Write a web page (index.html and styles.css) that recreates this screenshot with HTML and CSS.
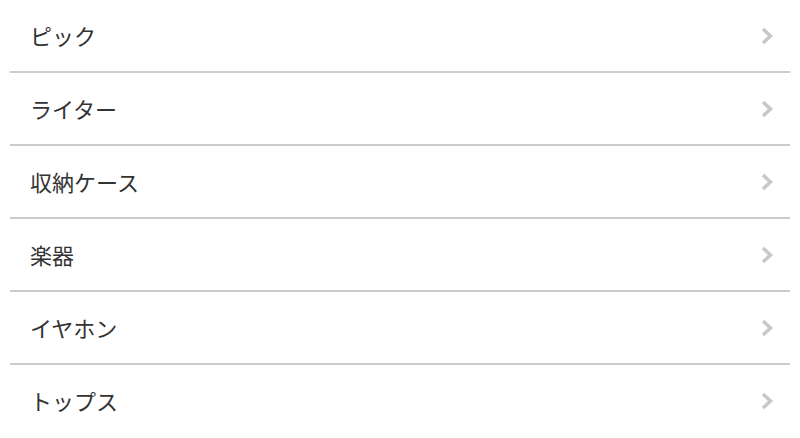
FILE: index.html
```html
<!DOCTYPE html>
<html lang="ja">
<head>
  <meta charset="UTF-8">
  <meta name="viewport" content="width=device-width, initial-scale=1.0">
  <title>カテゴリ</title>
  <link rel="stylesheet" href="styles.css">
</head>
<body>
  <ul class="menu-list">
    <li class="menu-item">
      <span class="menu-label">ピック</span>
      <svg class="chevron" viewBox="0 0 14 20"><polyline points="3,3 10.5,10 3,17"/></svg>
    </li>
    <li class="menu-item">
      <span class="menu-label">ライター</span>
      <svg class="chevron" viewBox="0 0 14 20"><polyline points="3,3 10.5,10 3,17"/></svg>
    </li>
    <li class="menu-item">
      <span class="menu-label">収納ケース</span>
      <svg class="chevron" viewBox="0 0 14 20"><polyline points="3,3 10.5,10 3,17"/></svg>
    </li>
    <li class="menu-item">
      <span class="menu-label">楽器</span>
      <svg class="chevron" viewBox="0 0 14 20"><polyline points="3,3 10.5,10 3,17"/></svg>
    </li>
    <li class="menu-item">
      <span class="menu-label">イヤホン</span>
      <svg class="chevron" viewBox="0 0 14 20"><polyline points="3,3 10.5,10 3,17"/></svg>
    </li>
    <li class="menu-item">
      <span class="menu-label">トップス</span>
      <svg class="chevron" viewBox="0 0 14 20"><polyline points="3,3 10.5,10 3,17"/></svg>
    </li>
  </ul>
</body>
</html>
```

FILE: styles.css
```css
body {
  margin: 0;
  background-color: #fff;
  font-family: "Noto Sans CJK JP", "Noto Sans", sans-serif;
  color: #333;
}
.menu-list {
  list-style-type: none;
  margin: 0 10px;
  padding: 0;
}
.menu-item {
  display: flex;
  align-items: center;
  justify-content: space-between;
  height: 71px;
  padding: 0 16px 0 20px;
  border-bottom: 2px solid #ccc;
}
.menu-item:last-child {
  border-bottom: none;
}
.menu-label {
  font-size: 22px;
  line-height: 1;
  margin-bottom: 2px;
}
.chevron {
  width: 14px;
  height: 20px;
  margin-top: 1px;
  fill: none;
  stroke: #c8c8c8;
  stroke-width: 3.5;
}
```
